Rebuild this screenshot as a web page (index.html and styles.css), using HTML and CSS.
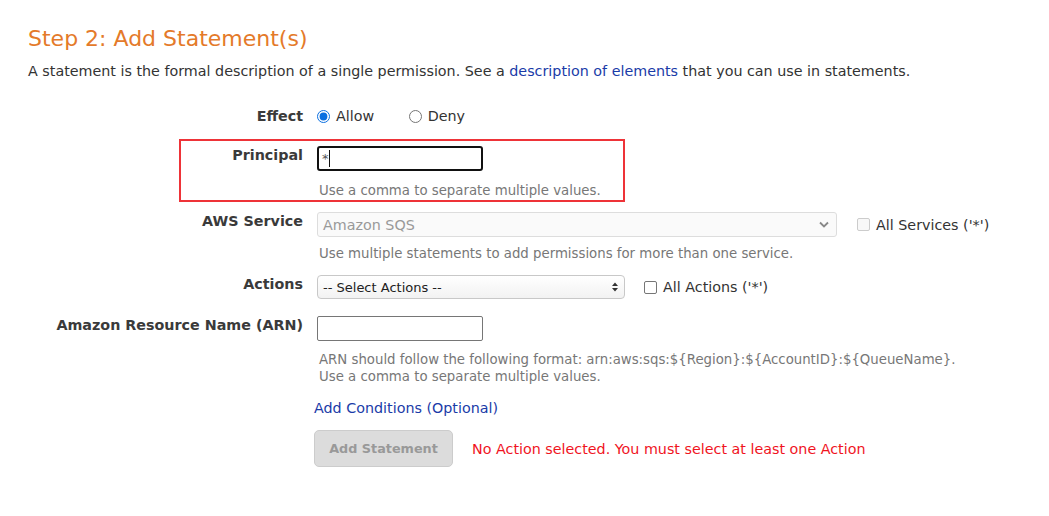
FILE: index.html
```html
<!DOCTYPE html>
<html>
<head>
<meta charset="utf-8">
<link rel="stylesheet" href="styles.css">
</head>
<body>
<div class="page">
  <h2 class="title">Step 2: Add Statement(s)</h2>
  <p class="intro">A statement is the formal description of a single permission. See a <a href="#" class="link">description of elements</a> that you can use in statements.</p>

  <div class="form">
    <div class="row row-effect">
      <div class="label">Effect</div>
      <div class="field">
        <label class="radio"><input type="radio" name="effect" checked> Allow</label>
        <label class="radio radio-deny"><input type="radio" name="effect"> Deny</label>
      </div>
    </div>

    <div class="row row-principal">
      <div class="label">Principal</div>
      <div class="field">
        <div class="text-input focused"><span class="caret-text">*</span><span class="caret"></span></div>
        <div class="help">Use a comma to separate multiple values.</div>
      </div>
    </div>

    <div class="row row-service">
      <div class="label">AWS Service</div>
      <div class="field">
        <div class="inline">
          <div class="select select-service">
            <span class="select-text">Amazon SQS</span>
            <svg class="chev" width="10" height="7" viewBox="0 0 10 7"><path d="M1 1.5 L5 5.5 L9 1.5" fill="none" stroke="#888" stroke-width="1.8"/></svg>
          </div>
          <label class="check check-disabled"><span class="box box-disabled"></span>All Services ('*')</label>
        </div>
        <div class="help help-service">Use multiple statements to add permissions for more than one service.</div>
      </div>
    </div>

    <div class="row row-actions">
      <div class="label">Actions</div>
      <div class="field">
        <div class="inline">
          <div class="select select-actions">
            <span class="select-text dark">-- Select Actions --</span>
            <svg class="updown" width="6" height="10" viewBox="0 0 6 10"><path d="M0 4 L3 0.5 L6 4 Z M0 6 L3 9.5 L6 6 Z" fill="#333"/></svg>
          </div>
          <label class="check check-actions"><span class="box"></span>All Actions ('*')</label>
        </div>
      </div>
    </div>

    <div class="row row-arn">
      <div class="label">Amazon Resource Name (ARN)</div>
      <div class="field">
        <div class="text-input"></div>
        <div class="help help-arn">ARN should follow the following format: arn:aws:sqs:${Region}:${AccountID}:${QueueName}.<br>Use a comma to separate multiple values.</div>
      </div>
    </div>

    <div class="row row-cond">
      <div class="label"></div>
      <div class="field field-cond">
        <a href="#" class="link">Add Conditions (Optional)</a>
      </div>
    </div>

    <div class="row row-submit">
      <div class="label"></div>
      <div class="field field-submit">
        <button class="btn" disabled>Add Statement</button>
        <span class="error">No Action selected. You must select at least one Action</span>
      </div>
    </div>
  </div>
</div>
</body>
</html>
```

FILE: styles.css
```css
* { box-sizing: border-box; }
html, body { margin: 0; padding: 0; background: #fff; }
body {
  font-family: "DejaVu Sans", Verdana, sans-serif;
  color: #333;
  font-size: 14.3px;
}
.page { padding: 24px 0 0 28px; }
.title {
  margin: 0;
  font-weight: normal;
  font-size: 22px;
  line-height: 30px;
  color: #e47a2a;
}
.intro {
  margin: 5px 0 0;
  font-size: 14.3px;
  line-height: 24px;
  color: #333;
}
.link { color: #1a3ba8; text-decoration: none; }

.form { margin-top: 17px; }
.row { display: flex; }
.label {
  width: 275px;
  flex: none;
  text-align: right;
  font-weight: bold;
  font-size: 14.3px;
  line-height: 18px;
  color: #3a3a3a;
}
.field { margin-left: 14px; }

.row-effect { height: 32px; align-items: center; }
.radio { display: inline-flex; align-items: center; line-height: 20px; }
.radio input { margin: 0 6px 0 0; width: 13px; height: 13px; accent-color: #0b6fe0; }
.radio-deny { margin-left: 30px; }

.row-principal { position: relative; margin-top: 14px; }
.row-principal::after {
  content: "";
  position: absolute;
  left: 151px; top: -7px;
  width: 442px; height: 59px;
  border: 2px solid #ee3338;
  pointer-events: none;
}
.text-input {
  width: 166px;
  height: 25px;
  border: 1px solid #767676;
  border-radius: 2px;
  display: flex;
  align-items: center;
  padding-left: 4px;
  font-size: 13px;
}
.text-input.focused { border: 2px solid #111; border-radius: 3px; padding-left: 3px; }
.caret-text { color: #555; }
.caret { width: 1px; height: 17px; background: #111; }
.help {
  margin-top: 10px;
  font-size: 13.3px;
  line-height: 17px;
  color: #777;
  padding-left: 2px;
}
.row-principal .help { margin-top: 11px; }

.row-service { margin-top: 13px; }
.inline { display: flex; align-items: center; }
.select {
  position: relative;
  height: 25px;
  border: 1px solid #ddd;
  border-radius: 3px;
  display: flex;
  align-items: center;
  padding-left: 5px;
  background: #fafafa;
}
.select-service { width: 520px; }
.select-text { color: #999; font-size: 14.3px; }
.select-text.dark { color: #222; font-size: 13px; }
.chev { position: absolute; right: 7px; top: 8px; }
.select-actions {
  width: 308px;
  height: 24px;
  border-color: #c8c8c8;
  border-radius: 4px;
  background: linear-gradient(#fff, #f2f2f2);
}
.updown { position: absolute; right: 6px; top: 6px; }
.check { display: inline-flex; align-items: center; font-size: 14.3px; color: #333; }
.check-disabled { margin-left: 20px; }
.check-actions { margin-left: 19px; }
.box {
  width: 13px; height: 13px;
  border: 1px solid #767676;
  border-radius: 2px;
  margin-right: 6px;
  background: #fff;
}
.box-disabled { border-color: #ccc; background: #f8f8f8; }
.help-service { margin-top: 8px; }

.row-actions { margin-top: 13px; }

.row-arn { margin-top: 17px; }
.help-arn { margin-top: 10px; }

.row-cond { margin-top: 14px; }
.field-cond { margin-left: 11px; font-size: 14.3px; line-height: 18px; }

.row-submit { margin-top: 13px; }
.field-submit { margin-left: 11px; display: flex; align-items: center; }
.btn {
  width: 139px; height: 37px;
  border: 1px solid #ccc;
  border-radius: 5px;
  background: #dcdcdc;
  color: #999;
  font-family: inherit;
  font-weight: bold;
  font-size: 12.8px;
}
.error { margin-left: 19px; color: #f0141e; font-size: 14.3px; }
```
